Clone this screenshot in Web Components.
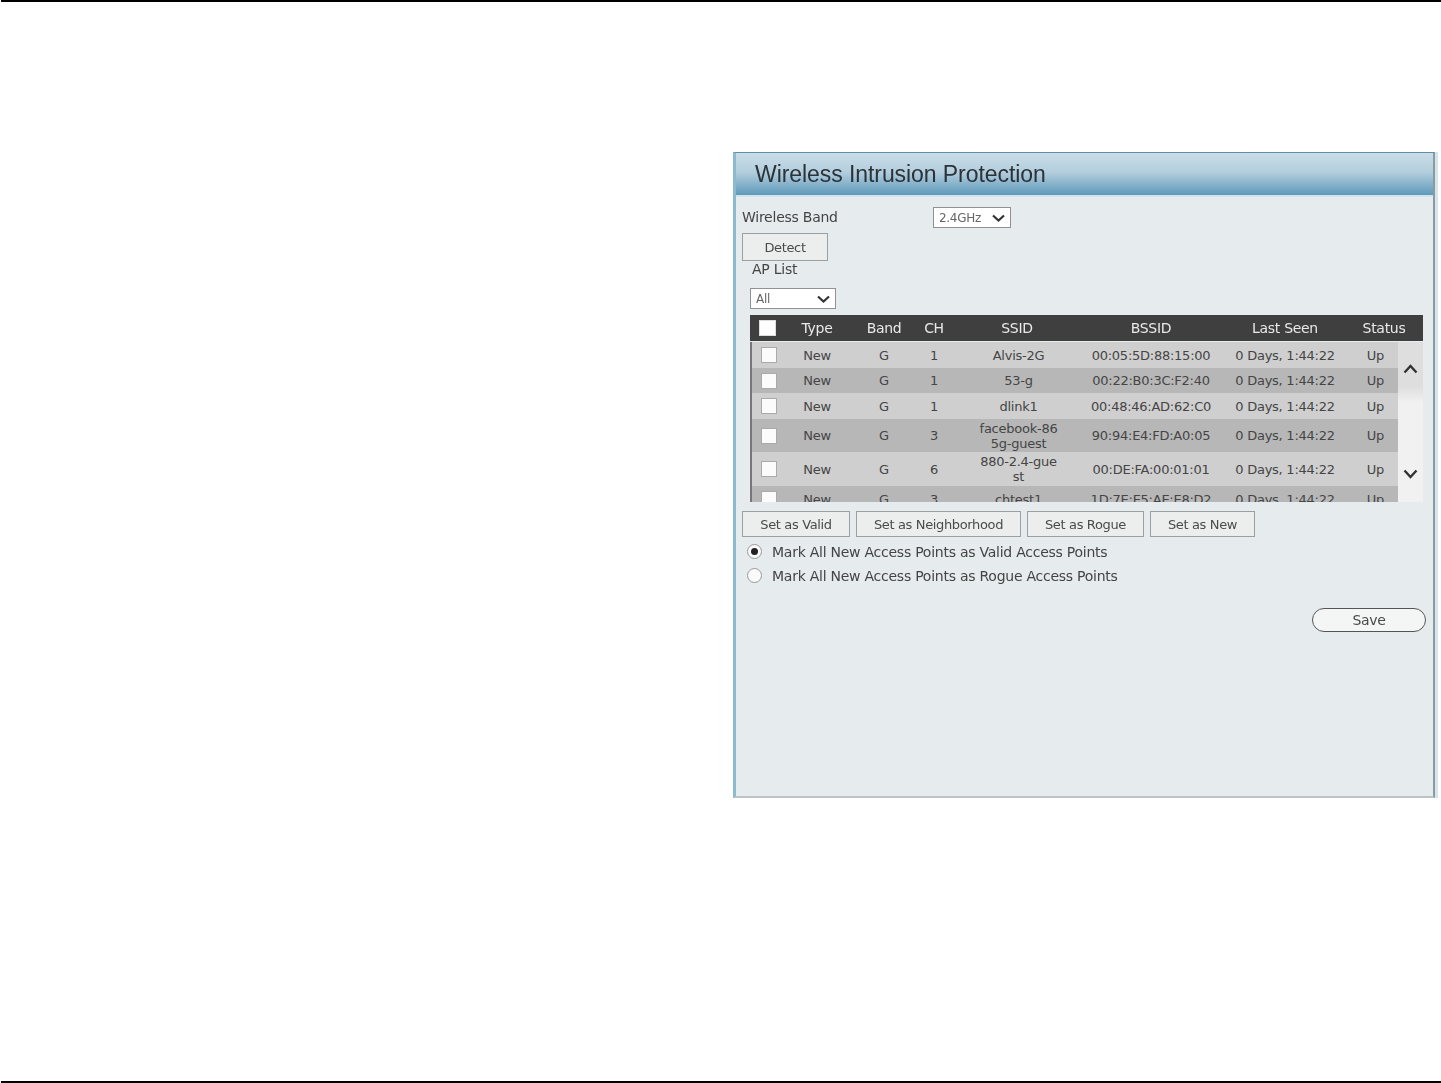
<!DOCTYPE html>
<html>
<head>
<meta charset="utf-8">
<style>
  html, body { margin: 0; background: #fff; }
  body { font-family: "DejaVu Sans", sans-serif; }
</style>
</head>
<body>
<manual-page>
  <wip-panel title="Wireless Intrusion Protection"></wip-panel>
</manual-page>
<script>
class ManualPage extends HTMLElement {
  connectedCallback() {
    this.attachShadow({ mode: 'open' });
    this.shadowRoot.innerHTML = `
      <style>
        :host { display: flex; flex-direction: column; height: 1083px; box-sizing: border-box; }
        .rule { height: 2px; background: #000; margin-left: 1px; flex: none; }
        .content { flex: 1; padding: 150px 0 0 733px; }
      </style>
      <div class="rule"></div>
      <div class="content"><slot></slot></div>
      <div class="rule"></div>
    `;
  }
}

class WipButton extends HTMLElement {
  connectedCallback() {
    this.attachShadow({ mode: 'open' });
    this.shadowRoot.innerHTML = `
      <style>
        :host {
          display: flex; align-items: center; justify-content: center;
          box-sizing: border-box;
          height: var(--h, 26px);
          width: var(--w, 100px);
          border: 1px solid #9a9fa2;
          background: #eceeee;
          color: #4a4a4a;
          font: 13px "DejaVu Sans", sans-serif;
          letter-spacing: -.35px;
          flex: none;
        }
        :host([round]) { border-radius: 12px; border-color: #555; background: #f4f6f6; font-size: 14px; }
      </style>
      <slot></slot>
    `;
  }
}

class WipSelect extends HTMLElement {
  connectedCallback() {
    this.attachShadow({ mode: 'open' });
    this.shadowRoot.innerHTML = `
      <style>
        :host {
          display: flex; align-items: center; justify-content: space-between;
          box-sizing: border-box;
          height: 21px;
          width: var(--w, 78px);
          padding: 0 5px;
          border: 1px solid #8f9396;
          background: #fff;
          color: #666;
          font: 12px "DejaVu Sans", sans-serif;
          letter-spacing: -.3px;
          flex: none;
        }
        svg { width: 13px; height: 8px; }
      </style>
      <slot></slot>
      <svg viewBox="0 0 13 8" fill="none" stroke="#333" stroke-width="2.2"><path d="M1 1.5l5.5 5 5.5-5"/></svg>
    `;
  }
}

class ApTable extends HTMLElement {
  connectedCallback() {
    const cols = '27px 80px 54px 46px 120px 148px 120px';
    const rows = [
      [26, '1', 'Alvis-2G', '00:05:5D:88:15:00'],
      [25, '1', '53-g', '00:22:B0:3C:F2:40'],
      [26, '1', 'dlink1', '00:48:46:AD:62:C0'],
      [33, '3', 'facebook-86<br>5g-guest', '90:94:E4:FD:A0:05'],
      [34, '6', '880-2.4-gue<br>st', '00:DE:FA:00:01:01'],
      [26, '3', 'chtest1', '1D:7E:E5:AE:E8:D2']
    ];
    const rowHtml = rows.map((r, i) => `
      <div class="row ${i % 2 ? 'even' : 'odd'}" style="height:${r[0]}px">
        <span class="cb"><i></i></span>
        <span>New</span><span>G</span><span>${r[1]}</span>
        <span class="ssid">${r[2]}</span><span>${r[3]}</span>
        <span>0 Days, 1:44:22</span><span class="up">Up</span>
      </div>`).join('');
    this.attachShadow({ mode: 'open' });
    this.shadowRoot.innerHTML = `
      <style>
        :host { display: block; width: 673px; font: 13px "DejaVu Sans", sans-serif; letter-spacing: -.25px; }
        .head, .row { display: grid; align-items: center; text-align: center; }
        .head {
          grid-template-columns: ${cols} 78px;
          height: 26px; margin-bottom: 1px;
          background: #3f3f3f; color: #e9e9e9;
          font-size: 14px; letter-spacing: -.3px;
        }
        .body { display: flex; height: 160px; overflow: hidden; border-left: 2px solid #777; }
        .rows { width: 646px; flex: none; color: #454545; }
        .row { grid-template-columns: 25px 80px 54px 46px 120px 148px 120px 53px; }
        .odd { background: #cfcfcf; }
        .even { background: #b7b7b7; }
        .ssid { line-height: 15px; padding-left: 3px; }
        .up { padding-left: 8px; }
        .cb { display: flex; padding-left: 9px; }
        .cb i { display: block; box-sizing: border-box; width: 17px; height: 16px; background: #fbfbfb; border: 1px solid #aaa; }
        .head .cb i { border-color: #ddd; background: #fff; }
        .bar {
          flex: 1; display: flex; flex-direction: column; justify-content: space-between; align-items: center;
          padding: 22px 0 23px; box-sizing: border-box;
          background: linear-gradient(#dedede 0 28%, #f1f1f1 38%);
        }
        .bar svg { width: 15px; height: 10px; }
      </style>
      <div class="head">
        <span class="cb"><i></i></span>
        <span>Type</span><span>Band</span><span>CH</span><span>SSID</span>
        <span>BSSID</span><span>Last Seen</span><span>Status</span>
      </div>
      <div class="body">
        <div class="rows">${rowHtml}</div>
        <div class="bar">
          <svg viewBox="0 0 15 10" fill="none" stroke="#333" stroke-width="2.4"><path d="M1.5 8.5l6-6.5 6 6.5"/></svg>
          <svg viewBox="0 0 15 10" fill="none" stroke="#333" stroke-width="2.4"><path d="M1.5 1.5l6 6.5 6-6.5"/></svg>
        </div>
      </div>
    `;
  }
}

class WipRadio extends HTMLElement {
  connectedCallback() {
    this.attachShadow({ mode: 'open' });
    this.shadowRoot.innerHTML = `
      <style>
        :host {
          display: flex; align-items: center; gap: 9px; height: 24px;
          color: #444; font: 14px "DejaVu Sans", sans-serif; letter-spacing: -.25px;
        }
        .dot {
          box-sizing: border-box; width: 15px; height: 15px; border-radius: 50%; flex: none; margin-top: -2px;
          border: 1px solid #999; background: #fafafa; display: flex; align-items: center; justify-content: center;
        }
        :host([checked]) .dot::after { content: ""; width: 7px; height: 7px; border-radius: 50%; background: #222; }
      </style>
      <span class="dot"></span><slot></slot>
    `;
  }
}

class WipPanel extends HTMLElement {
  connectedCallback() {
    this.attachShadow({ mode: 'open' });
    this.shadowRoot.innerHTML = `
      <style>
        :host {
          display: block; box-sizing: border-box; width: 702px; height: 646px;
          border: 1px solid #a7b6bd; border-left: 3px solid #8fb9d0; border-right: 2px solid #8a9a9f;
          border-top-color: #5f8da6; border-bottom: 2px solid #bcc3c6;
          background: #e6ebee;
          box-shadow: 3px 0 0 #d4e5ec;
          font-family: "DejaVu Sans", sans-serif;
          filter: blur(.6px);
        }
        h1 {
          margin: 0; height: 42px; display: flex; align-items: center; padding-left: 19px;
          font: 23px "Liberation Sans", sans-serif; color: #2a3338; letter-spacing: -.07px;
          background: linear-gradient(#c9dde8, #b4cedd 45%, #5f9abb);
          border-bottom: 2px solid #d3e3ec;
        }
        .body { padding: 10px 0 0 6px; color: #444; font-size: 14px; letter-spacing: -.25px; }
        .band { display: flex; align-items: center; height: 21px; }
        .band span { width: 191px; flex: none; margin-top: -2px; }
        .detect { margin-top: 5px; --w: 86px; --h: 28px; }
        .aplabel { margin: 0 0 0 10px; height: 17px; line-height: 17px; }
        .apsel { margin: 10px 0 6px 8px; --w: 86px; }
        ap-table { margin-left: 8px; }
        .actions { display: flex; gap: 6px; margin: 9px 0 3px; }
        .radios { padding-left: 5px; }
        .save { --w: 114px; --h: 24px; margin: 20px 0 0 570px; }
      </style>
      <h1>${this.getAttribute('title')}</h1>
      <div class="body">
        <div class="band"><span>Wireless Band</span><wip-select>2.4GHz</wip-select></div>
        <wip-button class="detect">Detect</wip-button>
        <div class="aplabel">AP List</div>
        <wip-select class="apsel">All</wip-select>
        <ap-table></ap-table>
        <div class="actions">
          <wip-button style="--w:108px">Set as Valid</wip-button>
          <wip-button style="--w:165px">Set as Neighborhood</wip-button>
          <wip-button style="--w:117px">Set as Rogue</wip-button>
          <wip-button style="--w:105px">Set as New</wip-button>
        </div>
        <div class="radios">
          <wip-radio checked style="gap:10px">Mark All New Access Points as Valid Access Points</wip-radio>
          <wip-radio style="gap:10px">Mark All New Access Points as Rogue Access Points</wip-radio>
        </div>
        <wip-button class="save" round>Save</wip-button>
      </div>
    `;
  }
}

customElements.define('manual-page', ManualPage);
customElements.define('wip-button', WipButton);
customElements.define('wip-select', WipSelect);
customElements.define('ap-table', ApTable);
customElements.define('wip-radio', WipRadio);
customElements.define('wip-panel', WipPanel);
</script>
</body>
</html>
